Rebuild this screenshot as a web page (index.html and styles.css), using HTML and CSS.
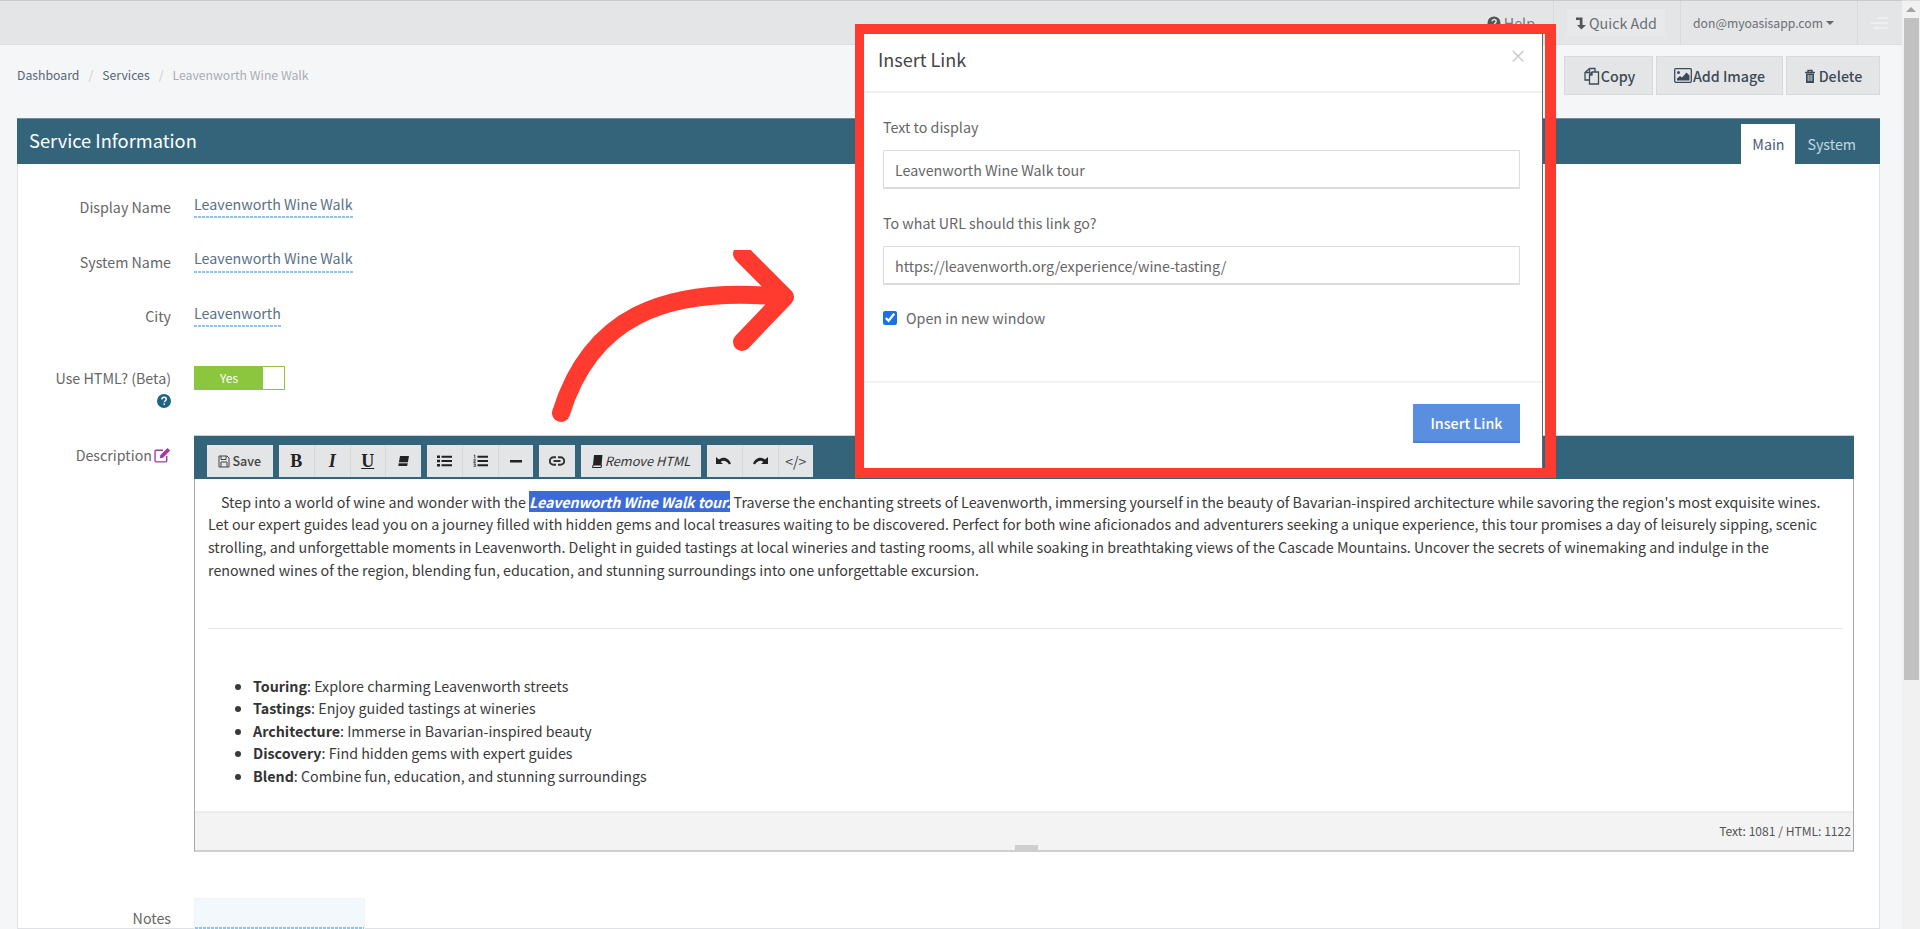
FILE: index.html
```html
<!DOCTYPE html>
<html lang="en">
<head>
<meta charset="utf-8">
<title>Leavenworth Wine Walk</title>
<link rel="stylesheet" href="styles.css">
</head>
<body>
<div class="page">
  <header class="topbar">
    <a class="top-help"><svg class="ico14" viewBox="0 0 16 16"><circle cx="8" cy="8" r="7.5" fill="#555"/><path d="M5.6 6.2C5.8 4.8 6.8 4 8.1 4c1.4 0 2.4.9 2.4 2.1 0 1-.6 1.5-1.3 2-.6.4-.8.7-.8 1.3" fill="none" stroke="#e4e5e7" stroke-width="1.6"/><rect x="7.4" y="10.6" width="1.7" height="1.7" fill="#e4e5e7"/></svg><span>Help</span></a>
    <div class="top-cell quick"><span class="quick-btn"><svg class="ico12" viewBox="0 0 12 14"><path d="M1 1.500h6.500v7.500H11l-4.600 4.500L2 9h2.800V4H1z" fill="#555"/></svg>Quick Add</span></div>
    <div class="top-cell user"><span>don@myoasisapp.com</span><i class="caret"></i></div>
    <div class="top-cell burger"><i class="b1"></i><i class="b2"></i><i class="b3"></i></div>
  </header>
  <main class="content">
    <div class="crumbs-row">
      <nav class="crumbs"><a>Dashboard</a><b>/</b><a>Services</a><b>/</b><span>Leavenworth Wine Walk</span></nav>
      <div class="actions">
        <button class="act act-copy"><svg class="ico16" viewBox="0 0 18 18"><path d="M7.500 1.500L3 5.500v7.500h4.500M7.500 1.500H13V5M3 5.500h4.500v-4M10 5h6.500v12H7.500V7.500zM10 5v3H7.500" fill="none" stroke="#3d4a57" stroke-width="1.300"/></svg>Copy</button>
        <button class="act act-img"><svg class="ico18" viewBox="0 0 18 15"><rect x=".7" y=".7" width="16.600" height="13.600" rx="1" fill="none" stroke="#3d4a57" stroke-width="1.300"/><circle cx="4.500" cy="4.500" r="1.500" fill="#3d4a57"/><path d="M3 12.500v-2l3-2.500 2 1.500 4.500-5 3 3v5z" fill="#3d4a57"/></svg>Add Image</button>
        <button class="act act-del"><svg class="ico12" viewBox="0 0 12 14"><path d="M1 3.500h10M4 3.500V1.500h4v2" fill="none" stroke="#3d4a57" stroke-width="1.400"/><path d="M2 4.500h8V14H2z" fill="#3d4a57"/><path d="M4.200 6v6M6 6v6M7.800 6v6" stroke="#e4e5e7" stroke-width=".8"/></svg>Delete</button>
      </div>
    </div>
    <section class="panel">
      <div class="panel-head">
        <h2>Service Information</h2>
        <div class="tabs"><span class="tab on">Main</span><span class="tab">System</span></div>
      </div>
      <div class="panel-body">
        <div class="row"><label>Display Name</label><span class="editable">Leavenworth Wine Walk</span></div>
        <div class="row"><label>System Name</label><span class="editable">Leavenworth Wine Walk</span></div>
        <div class="row"><label>City</label><span class="editable">Leavenworth</span></div>
        <div class="row row-toggle">
          <label>Use HTML? (Beta)<svg class="help-ico" viewBox="0 0 14 14"><circle cx="7" cy="7" r="7" fill="#1f6287"/><path d="M4.800 5.300C5 4 5.900 3.300 7.100 3.300c1.300 0 2.200.8 2.200 1.900 0 .9-.5 1.300-1.200 1.800-.5.400-.7.700-.7 1.200" fill="none" stroke="#fff" stroke-width="1.500"/><rect x="6.500" y="9.400" width="1.500" height="1.500" fill="#fff"/></svg></label>
          <div class="toggle"><span class="toggle-on">Yes</span><span class="toggle-knob"></span></div>
        </div>
        <div class="row row-editor">
          <label>Description<svg class="edit-ico" viewBox="0 0 16 15"><path d="M12 8.500V13a1 1 0 0 1-1 1H2a1 1 0 0 1-1-1V4a1 1 0 0 1 1-1h6.500" fill="none" stroke="#a23aa0" stroke-width="1.300"/><path d="M6 7.500L12.800.8l2.400 2.400L8.500 10l-3 .6z" fill="#a23aa0"/></svg></label>
          <div class="editor">
            <div class="toolbar">
              <div class="tgroup"><button class="tbtn tbtn-save"><svg class="ico12" viewBox="0 0 12 14"><path d="M1 2h8l2 2v9H1z M3 2v3.500h5V2 M3 13V8h6v5" fill="none" stroke="#444" stroke-width="1"/></svg>Save</button></div>
              <div class="tgroup">
                <button class="tbtn ser"><strong>B</strong></button>
                <button class="tbtn ser"><strong><em>I</em></strong></button>
                <button class="tbtn ser"><strong><u>U</u></strong></button>
                <button class="tbtn"><svg class="ico14" viewBox="0 0 14 14"><path d="M4 2h9l-1.800 10H2.300z" fill="#222"/><path d="M3 8.800h9" stroke="#e4e5e7" stroke-width="1"/></svg></button>
              </div>
              <div class="tgroup">
                <button class="tbtn"><svg class="ico15" viewBox="0 0 15 14"><path d="M0 1.500h3v2.500H0zM0 5.800h3v2.500H0zM0 10h3v2.500H0zM4.500 1.700H15v2H4.500zM4.500 6H15v2H4.500zM4.500 10.300H15v2H4.500z" fill="#222"/></svg></button>
                <button class="tbtn"><svg class="ico15" viewBox="0 0 15 14"><path d="M4.500 1.700H15v2H4.500zM4.500 6H15v2H4.500zM4.500 10.300H15v2H4.500z" fill="#222"/><path d="M.8 1h1v3.500M.3 5.800h2.400l-2.200 2.500h2.400M.5 10h2.200l-1 1 1 1.300H.5" fill="none" stroke="#222" stroke-width=".8"/></svg></button>
                <button class="tbtn"><svg class="ico14" viewBox="0 0 14 14"><rect x="1" y="6" width="12" height="2.500" fill="#222"/></svg></button>
              </div>
              <div class="tgroup">
                <button class="tbtn"><svg class="ico16b" viewBox="0 0 16 16"><path d="M7 4.300H4.500a3.700 3.700 0 0 0 0 7.400H7M9 4.300h2.500a3.700 3.700 0 0 1 0 7.400H9M4.500 8h7" fill="none" stroke="#333" stroke-width="2"/></svg></button>
              </div>
              <div class="tgroup"><button class="tbtn tbtn-rm"><svg class="ico12" viewBox="0 0 12 14"><path d="M3 1h8.500l-1 10H2z" fill="#222"/><path d="M2 11h8.500l-.3 2.500H1.500z" fill="none" stroke="#222" stroke-width="1"/></svg><em>Remove HTML</em></button></div>
              <div class="tgroup">
                <button class="tbtn"><svg class="ico16c" viewBox="0 0 16 12"><path d="M0 2v7h7L4.700 6.900C7 5 10.500 5.500 13 9.500l2-1C13 3.500 8 .5 3 4.500z" fill="#222"/></svg></button>
                <button class="tbtn"><svg class="ico16c" viewBox="0 0 16 12"><path d="M16 2v7H9l2.300-2.100C9 5 5.500 5.500 3 9.500l-2-1C3 3.500 8 .5 13 4.500z" fill="#222"/></svg></button>
                <button class="tbtn tbtn-code">&lt;/&gt;</button>
              </div>
            </div>
            <div class="edit-area">
              <p class="lead">Step into a world of wine and wonder with the <span class="sel">Leavenworth Wine Walk tour.</span> Traverse the enchanting streets of Leavenworth, immersing yourself in the beauty of Bavarian-inspired architecture while savoring the region's most exquisite wines.<br>Let our expert guides lead you on a journey filled with hidden gems and local treasures waiting to be discovered. Perfect for both wine aficionados and adventurers seeking a unique experience, this tour promises a day of leisurely sipping, scenic<br>strolling, and unforgettable moments in Leavenworth. Delight in guided tastings at local wineries and tasting rooms, all while soaking in breathtaking views of the Cascade Mountains. Uncover the secrets of winemaking and indulge in the<br>renowned wines of the region, blending fun, education, and stunning surroundings into one unforgettable excursion.</p>
              <hr>
              <ul>
                <li><b>Touring</b>: Explore charming Leavenworth streets</li>
                <li><b>Tastings</b>: Enjoy guided tastings at wineries</li>
                <li><b>Architecture</b>: Immerse in Bavarian-inspired beauty</li>
                <li><b>Discovery</b>: Find hidden gems with expert guides</li>
                <li><b>Blend</b>: Combine fun, education, and stunning surroundings</li>
              </ul>
            </div>
            <div class="status">Text: 1081 / HTML: 1122</div>
            <i class="handle"></i>
          </div>
        </div>
        <div class="row row-notes"><label>Notes</label><div class="notes-box"></div></div>
      </div>
    </section>
  </main>
</div>
<aside class="scrollbar"><i class="sb-up"></i><i class="sb-thumb"></i></aside>

<svg class="arrow" viewBox="0 0 260 190" aria-hidden="true"><path d="M11 163C40 70 110 35 235 47M192 4l43 43-43 45" fill="none" stroke="#ff3b2f" stroke-width="18" stroke-linecap="round" stroke-linejoin="round"/></svg>

<div class="frame">
  <div class="modal">
    <div class="modal-head"><h3>Insert Link</h3><span class="close">×</span></div>
    <div class="modal-body">
      <label class="mlabel">Text to display</label>
      <div class="minput">Leavenworth Wine Walk tour</div>
      <label class="mlabel mlabel2">To what URL should this link go?</label>
      <div class="minput">https://leavenworth.org/experience/wine-tasting/</div>
      <label class="mcheck"><input type="checkbox" checked><span>Open in new window</span></label>
    </div>
    <div class="modal-foot"><button class="insert">Insert Link</button></div>
  </div>
</div>
</body>
</html>
```
FILE: styles.css
```css
* { box-sizing: border-box; }
html, body { margin: 0; height: 100%; overflow: hidden; }
body {
  display: flex;
  font-family: "Noto Sans CJK SC", "Source Sans Pro", "Open Sans", sans-serif;
  font-size: 14.28px;
  line-height: 22px;
  color: #555;
  background: #f5f6f8;
}
button { font: inherit; cursor: pointer; }
svg { display: block; flex: none; }
.ico12 { width: 12px; height: 14px; }
.ico14 { width: 14px; height: 14px; }
.ico15 { width: 15px; height: 14px; }
.ico16 { width: 18px; height: 18px; }
.ico16b { width: 16px; height: 16px; }
.ico16c { width: 16px; height: 12px; }
.ico18 { width: 18px; height: 15px; }

.page { flex: 1; min-width: 0; display: flex; flex-direction: column; }

/* top bar */
.topbar {
  height: 45px;
  flex: none;
  display: flex;
  justify-content: flex-end;
  background: #e4e5e7;
  border-top: 1px solid #c9c9c9;
  border-bottom: 1px solid #dcdde0;
  color: #6b6f74;
}
.top-help { display: flex; align-items: center; gap: 3px; margin-right: 18px; color: #777; }
.top-cell { display: flex; align-items: center; border-left: 1px solid #d8d9dc; }
.quick { width: 127px; padding-left: 13px; }
.quick-btn { display: flex; align-items: center; gap: 2px; width: 98px; height: 27px; padding: 0 0 0 8px; background: #e8e9eb; }
.user { width: 177px; padding-left: 12px; font-size: 12.2px; gap: 3px; }
.caret { border: 4px solid transparent; border-top-color: #666; border-bottom: 0; }
.burger { width: 45px; padding-right: 14px; flex-direction: column; align-items: flex-end; justify-content: center; gap: 3px; }
.burger i { height: 2px; background: #eeeff0; }
.burger .b1 { width: 11px; }
.burger .b2 { width: 18px; }
.burger .b3 { width: 15px; }

/* content */
.content { flex: 1; min-height: 0; padding: 0 22px 0 17px; overflow: hidden; }
.crumbs-row { height: 73px; display: flex; justify-content: space-between; align-items: flex-start; }
.crumbs { display: flex; align-items: center; height: 60px; font-size: 12.25px; color: #556677; }
.crumbs b { font-weight: 400; color: #c8ccd0; margin: 0 9px; }
.crumbs span { color: #a9adb2; }
.actions { display: flex; gap: 3px; margin-top: 11px; margin-left: auto; }
.act {
  height: 39px;
  display: flex;
  align-items: center;
  justify-content: center;
  gap: 1px;
  background: #e4e5e7;
  border: 1px solid #d8d9db;
  color: #3d4a57;
  font-weight: 500;
}
.act-copy { width: 89px; }
.act-img { width: 127px; }
.act-del { width: 94px; gap: 3px; }

/* panel */
.panel { background: #fff; border: 1px solid #dfe1e4; border-top: 0; height: 811px; }
.panel-head {
  height: 46px;
  margin: 0 -1px;
  background: #33647a;
  border-top: 1px solid #6d8c9a;
  display: flex;
  justify-content: space-between;
  align-items: flex-end;
  padding-left: 12px;
}
.panel-head h2 { margin: 0 0 4px; align-self: center; font-size: 18.3px; font-weight: 400; line-height: 26px; color: #fff; }
.tabs { display: flex; }
.tab { height: 40px; padding: 0 24px 0 12px; display: flex; align-items: center; color: #c3d8e2; }
.tab.on { width: 54px; padding: 0; justify-content: center; background: #fff; color: #4c5a78; }

.panel-body { padding-top: 32px; }
.row { display: flex; gap: 23px; height: 54.5px; align-items: flex-start; }
.row > label { width: 153px; flex: none; text-align: right; color: #666; }
.editable {
  margin-top: -3.5px;
  height: 25.5px;
  color: #5a7088;
  background: repeating-linear-gradient(90deg, #8fc3ee 0 3px, transparent 3px 4px) left bottom / 100% 2px no-repeat;
}
.row-toggle { height: 68px; margin-top: 7px; }
.help-ico { width: 14px; height: 14px; margin: 5px 0 0 auto; }
.toggle { width: 91px; height: 24px; margin-top: -1px; display: flex; border: 1px solid #8cc63f; background: #fff; }
.toggle-on { width: 68px; background: #8cc63f; color: #fff; font-size: 12px; line-height: 22px; text-align: center; }
.row-editor { height: auto; }
.row-editor > label { padding-top: 9px; display: flex; align-items: center; justify-content: flex-end; gap: 2px; }
.edit-ico { width: 17px; height: 16px; margin-top: 1px; }
.editor { position: relative; width: 1660px; border: 1px solid #a9a9a9; border-top: 0; border-bottom: 2px solid #cfcfcf; }

.toolbar { height: 44px; margin: 0 -1px; background: #33647a; border-top: 1px solid #c9ced1; display: flex; gap: 6px; padding: 9px 0 0 13px; }
.tgroup { display: flex; height: 32px; background: #e4e5e7; }
.tbtn {
  width: 35.5px;
  height: 32px;
  display: flex;
  align-items: center;
  justify-content: center;
  padding: 0;
  background: #e4e5e7;
  border: 0;
  border-left: 1px solid #d6d7d9;
  color: #222;
  font-size: 12.5px;
}
.tbtn:first-child { border-left: 0; }
.tbtn-save { width: 65.5px; gap: 2px; color: #444; font-weight: 500; }
.tbtn-rm { width: 120px; gap: 2px; font-size: 12.8px; color: #333; }
.tbtn-code { font-size: 14px; color: #444; }
.ser { font-family: "Liberation Serif", serif; font-size: 18px; }

.edit-area { height: 332px; padding: 12px 10px 0 13px; background: #fff; color: #3a3a3a; line-height: 22.8px; }
.lead { margin: 0; white-space: nowrap; text-indent: 13px; }
.sel { background: #3c6bd8; color: #fff; font-weight: 700; font-style: italic; letter-spacing: -.13px; }
.edit-area hr { margin: 46.3px 0 45.7px; border: 0; border-top: 1px solid #e6e6e6; }
.edit-area ul { margin: 0; padding-left: 45px; line-height: 22.5px; }
.edit-area b { color: #333; font-weight: 700; }
.status { height: 39px; background: #f3f3f3; border-top: 2px solid #ececec; padding-right: 2px; text-align: right; font-size: 12.1px; line-height: 35px; color: #555; }
.handle { position: absolute; left: 820px; bottom: -2px; width: 23px; height: 7px; background: #cfcfcf; }

.row-notes { margin-top: 46px; height: auto; }
.row-notes > label { padding-top: 9px; }
.notes-box {
  width: 171px;
  height: 31px;
  border: 1px solid #eef4fa;
  border-bottom: 0;
  background: repeating-linear-gradient(90deg, #8fc3ee 0 3px, transparent 3px 4px) left bottom / 100% 2px no-repeat, #f3f8fc;
}

/* scrollbar */
.scrollbar { width: 18px; flex: none; background: #f1f1f1; display: flex; flex-direction: column; align-items: center; border-top: 1px solid #dcdcdc; }
.sb-up { margin-top: 6px; border: 5px solid transparent; border-bottom: 5px solid #a3a3a3; border-top: 0; }
.sb-thumb { width: 15px; height: 662px; margin-top: 6px; background: #c1c1c1; }

/* annotation */
.arrow { position: absolute; left: 550px; top: 250px; width: 260px; height: 190px; }
.frame { position: absolute; left: 855px; top: 24px; width: 701px; height: 454px; border: solid #ff3b2f; border-width: 10px 11px 10px 9px; }
.modal { width: 679px; height: 100%; display: flex; flex-direction: column; background: #fff; border-right: 1px solid #666; }
.modal-head { height: 59px; padding: 0 14px; display: flex; justify-content: space-between; border-bottom: 2px solid #f0f0f0; }
.modal-head h3 { margin: 0; font-size: 18px; font-weight: 400; line-height: 51px; color: #444; }
.close { font-size: 18px; line-height: 42px; color: #c6c6c6; margin-right: 1px; }
.modal-body { height: 290px; padding: 23px 22px 0 19px; border-bottom: 2px solid #f2f2f2; }
.mlabel { display: block; line-height: 22px; color: #666; }
.mlabel2 { margin-top: 23px; }
.minput { height: 39px; margin-top: 12px; padding-left: 11px; line-height: 37px; border: 1px solid #ddd; border-bottom-width: 2px; color: #666; }
.mcheck { display: flex; align-items: center; gap: 9px; margin-top: 22px; color: #666; }
.mcheck input { width: 14px; height: 14px; margin: 0; accent-color: #1f6fe0; }
.modal-foot { flex: 1; display: flex; justify-content: flex-end; padding: 21px 22px 0 0; }
.insert { width: 107px; height: 39px; background: #5a8fdf; border: 0; border-bottom: 2px solid #4d82d0; color: #fff; font-weight: 500; }
```
